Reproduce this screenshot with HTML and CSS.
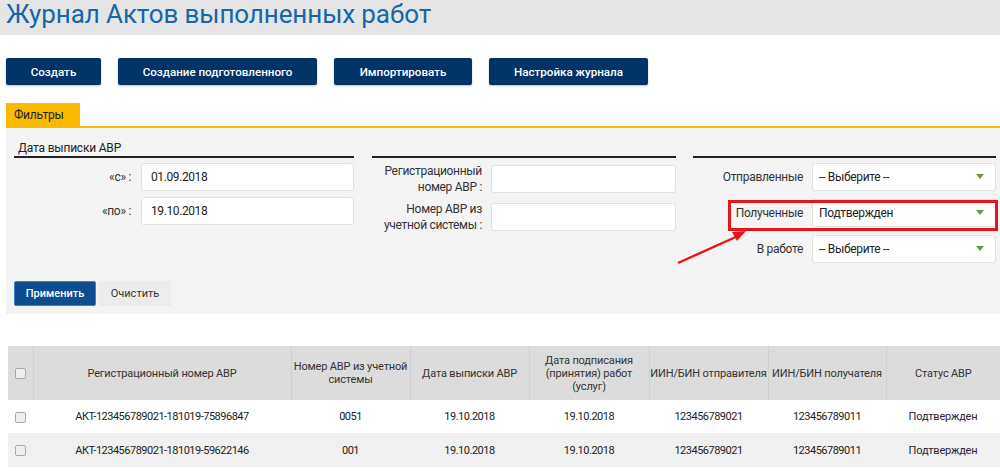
FILE: index.html
```html
<!DOCTYPE html>
<html lang="ru">
<head>
<meta charset="utf-8">
<link rel="stylesheet" href="styles.css">
</head>
<body>
<div class="page">
  <div class="header"><h1 class="title">Журнал Актов выполненных работ</h1></div>

  <div class="actions">
    <button class="btn btn-dark w1">Создать</button>
    <button class="btn btn-dark w2">Создание подготовленного</button>
    <button class="btn btn-dark w3">Импортировать</button>
    <button class="btn btn-dark w4">Настройка журнала</button>
  </div>

  <div class="filters">
    <div class="tabbar"><div class="tab">Фильтры</div></div>
    <div class="panel">
      <div class="cols">
        <div class="col col1">
          <div class="col-head">Дата выписки АВР</div>
          <div class="rows rows1">
            <div class="row"><span class="lbl lbl1">«с» :</span><div class="inp inp1">01.09.2018</div></div>
            <div class="row"><span class="lbl lbl1">«по» :</span><div class="inp inp1">19.10.2018</div></div>
          </div>
        </div>
        <div class="col col2">
          <div class="col-head"></div>
          <div class="rows rows2">
            <div class="row"><span class="lbl lbl2">Регистрационный<br>номер АВР :</span><div class="inp inp2"></div></div>
            <div class="row"><span class="lbl lbl2">Номер АВР из<br>учетной системы :</span><div class="inp inp2"></div></div>
          </div>
        </div>
        <div class="col col3">
          <div class="col-head"></div>
          <div class="rows rows3">
            <div class="row"><span class="lbl lbl3">Отправленные</span><div class="inp sel">-- Выберите --<span class="caret"></span></div></div>
            <div class="row"><span class="lbl lbl3">Полученные</span><div class="inp sel">Подтвержден<span class="caret"></span></div></div>
            <div class="row"><span class="lbl lbl3">В работе</span><div class="inp sel">-- Выберите --<span class="caret"></span></div></div>
          </div>
        </div>
      </div>
      <div class="panel-actions">
        <button class="btn btn-apply">Применить</button>
        <button class="btn btn-clear">Очистить</button>
      </div>
    </div>
  </div>

  <table class="grid">
    <thead>
      <tr>
        <th class="c0"><span class="cb"></span></th>
        <th class="c1">Регистрационный номер АВР</th>
        <th class="c2">Номер АВР из учетной системы</th>
        <th class="c3">Дата выписки АВР</th>
        <th class="c4">Дата подписания (принятия) работ (услуг)</th>
        <th class="c5">ИИН/БИН отправителя</th>
        <th class="c6">ИИН/БИН получателя</th>
        <th class="c7">Статус АВР</th>
      </tr>
    </thead>
    <tbody>
      <tr>
        <td><span class="cb"></span></td>
        <td>АКТ-123456789021-181019-75896847</td>
        <td>0051</td>
        <td>19.10.2018</td>
        <td>19.10.2018</td>
        <td>123456789021</td>
        <td>123456789011</td>
        <td class="status">Подтвержден</td>
      </tr>
      <tr class="alt">
        <td><span class="cb"></span></td>
        <td>АКТ-123456789021-181019-59622146</td>
        <td>001</td>
        <td>19.10.2018</td>
        <td>19.10.2018</td>
        <td>123456789021</td>
        <td>123456789011</td>
        <td class="status">Подтвержден</td>
      </tr>
    </tbody>
  </table>

  <div class="highlight"></div>
  <svg class="arrow" width="80" height="40" viewBox="0 0 80 40">
    <line x1="2" y1="37" x2="62" y2="10" stroke="#e8141c" stroke-width="2.4"/>
    <polygon points="70,5 56,6 61,15" fill="#e8141c"/>
  </svg>
</div>
</body>
</html>
```

FILE: styles.css
```css
* { box-sizing: border-box; }
html, body { margin: 0; padding: 0; background: #fff; }
body { font-family: Roboto, "Liberation Sans", Arial, sans-serif; color: #333; }
.page { position: relative; width: 1000px; height: 476px; overflow: hidden; }

.header { background: #e5e5e5; height: 35px; padding-left: 6px; }
.title { margin: 0; font-weight: 400; font-size: 26px; line-height: 29px; color: #1766a9; letter-spacing: -0.1px; }

.actions { display: flex; gap: 17px; padding: 23px 0 0 6px; height: 50px; }
.btn { font-family: Roboto, "Liberation Sans", Arial, sans-serif; border: 0; cursor: pointer; padding: 0; }
.btn-dark { background: #003466; color: #fff; font-size: 11.6px; font-weight: 500; height: 27px; border-radius: 2px; box-shadow: 0 1px 2px rgba(0,0,0,0.25); }
.w1 { width: 95px; } .w2 { width: 199px; } .w3 { width: 138px; } .w4 { width: 159px; }

.filters { margin: 18px 0 0 6px; }
.tabbar { border-bottom: 2px solid #fbb900; height: 25px; }
.tab { width: 74px; height: 23px; background: #fbb900; color: #222; font-size: 12px; line-height: 24px; padding-left: 8px; letter-spacing: -0.2px; }
.panel { background: #f4f4f4; height: 186px; padding: 0 4px 0 8px; }
.cols { display: flex; gap: 18px; }
.col1 { width: 340px; }
.col2 { width: 304px; }
.col3 { width: 303px; margin-left: -1px; }
.col-head { height: 30px; border-bottom: 2px solid #222; font-size: 12px; color: #222; padding: 13px 0 0 4px; line-height: 14px; letter-spacing: -0.2px; }
.rows { display: flex; flex-direction: column; }
.rows1 { padding-top: 5px; gap: 6px; }
.rows2 { padding-top: 5px; gap: 6px; }
.rows3 { padding-top: 5px; gap: 8px; }
.row { display: flex; align-items: center; }
.lbl { font-size: 12px; color: #333; text-align: right; line-height: 16px; letter-spacing: -0.3px; }
.lbl1 { width: 117px; margin-right: 10px; }
.lbl2 { width: 110px; margin-right: 9px; }
.lbl3 { width: 110px; margin-right: 9px; }
.inp { height: 28px; background: #fff; border: 1px solid #e0e0e0; border-radius: 3px; font-size: 12px; color: #222; line-height: 26px; padding-left: 9px; position: relative; letter-spacing: -0.4px; }
.inp1 { width: 213px; }
.inp2 { width: 185px; }
.sel { width: 184px; padding-left: 6px; letter-spacing: -0.3px; }
.caret { position: absolute; right: 11px; top: 10px; width: 0; height: 0; border-left: 4.5px solid transparent; border-right: 4.5px solid transparent; border-top: 5px solid #6a9a3a; }

.panel-actions { display: flex; gap: 3px; padding-top: 18px; }
.btn-apply { width: 82px; height: 25px; background: #0b4d8e; border: 1px solid #3c7fd0; border-radius: 2px; color: #fff; font-size: 11px; font-weight: 500; }
.btn-clear { width: 72px; height: 25px; background: #ececec; color: #333; font-size: 11px; }

.grid { margin: 32px 0 0 8px; width: 992px; border-collapse: collapse; table-layout: fixed; font-size: 11px; }
.grid th { background: #dcdcdc; height: 54px; font-weight: 400; color: #333; line-height: 13px; border-left: 1px solid #cfcfcf; padding: 0; text-align: center; letter-spacing: -0.15px; }
.grid th:first-child { border-left: 0; }
.grid td { height: 33px; text-align: center; color: #222; padding: 0 2px; letter-spacing: -0.5px; }
.grid tr.alt td { background: #f0f0f0; height: 34px; }
.grid .status { color: #2c2438; letter-spacing: -0.2px; }
.c0 { width: 25px; } .c1 { width: 258px; } .c2 { width: 119px; } .c3 { width: 119px; }
.c4 { width: 120px; } .c5 { width: 119px; } .c6 { width: 118px; } .c7 { width: 114px; }
.grid th.c2 { padding: 0 1px; }
.grid th.c4 { padding: 0 5px; }
.cb { display: inline-block; width: 11px; height: 11px; border: 1px solid #a8a8a8; border-radius: 2px; background: #eee; vertical-align: middle; }

.highlight { position: absolute; left: 728px; top: 200px; width: 270px; height: 31px; border: 3px solid #e8141c; }
.arrow { position: absolute; left: 676px; top: 226px; }
```
